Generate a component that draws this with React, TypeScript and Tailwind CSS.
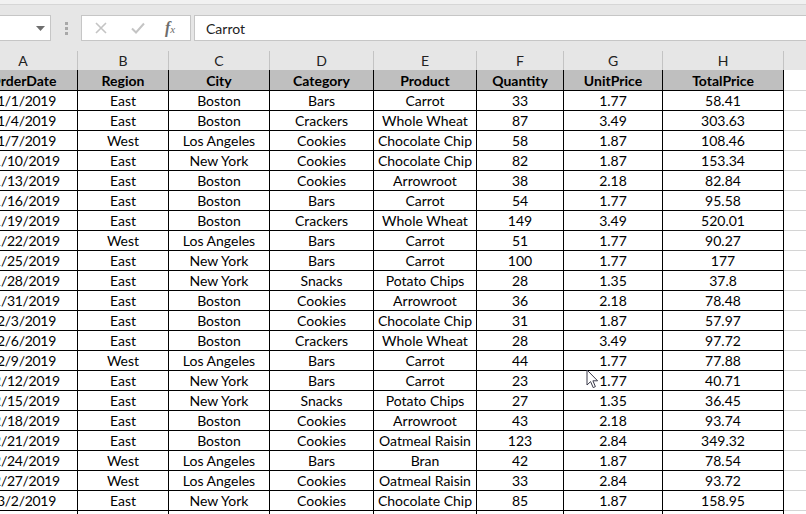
import React from "react";

const rows: string[][] = [
  ["1/1/2019", "East", "Boston", "Bars", "Carrot", "33", "1.77", "58.41"],
  ["1/4/2019", "East", "Boston", "Crackers", "Whole Wheat", "87", "3.49", "303.63"],
  ["1/7/2019", "West", "Los Angeles", "Cookies", "Chocolate Chip", "58", "1.87", "108.46"],
  ["1/10/2019", "East", "New York", "Cookies", "Chocolate Chip", "82", "1.87", "153.34"],
  ["1/13/2019", "East", "Boston", "Cookies", "Arrowroot", "38", "2.18", "82.84"],
  ["1/16/2019", "East", "Boston", "Bars", "Carrot", "54", "1.77", "95.58"],
  ["1/19/2019", "East", "Boston", "Crackers", "Whole Wheat", "149", "3.49", "520.01"],
  ["1/22/2019", "West", "Los Angeles", "Bars", "Carrot", "51", "1.77", "90.27"],
  ["1/25/2019", "East", "New York", "Bars", "Carrot", "100", "1.77", "177"],
  ["1/28/2019", "East", "New York", "Snacks", "Potato Chips", "28", "1.35", "37.8"],
  ["1/31/2019", "East", "Boston", "Cookies", "Arrowroot", "36", "2.18", "78.48"],
  ["2/3/2019", "East", "Boston", "Cookies", "Chocolate Chip", "31", "1.87", "57.97"],
  ["2/6/2019", "East", "Boston", "Crackers", "Whole Wheat", "28", "3.49", "97.72"],
  ["2/9/2019", "West", "Los Angeles", "Bars", "Carrot", "44", "1.77", "77.88"],
  ["2/12/2019", "East", "New York", "Bars", "Carrot", "23", "1.77", "40.71"],
  ["2/15/2019", "East", "New York", "Snacks", "Potato Chips", "27", "1.35", "36.45"],
  ["2/18/2019", "East", "Boston", "Cookies", "Arrowroot", "43", "2.18", "93.74"],
  ["2/21/2019", "East", "Boston", "Cookies", "Oatmeal Raisin", "123", "2.84", "349.32"],
  ["2/24/2019", "West", "Los Angeles", "Bars", "Bran", "42", "1.87", "78.54"],
  ["2/27/2019", "West", "Los Angeles", "Cookies", "Oatmeal Raisin", "33", "2.84", "93.72"],
  ["3/2/2019", "East", "New York", "Cookies", "Chocolate Chip", "85", "1.87", "158.95"],
  ["", "", "", "", "", "", "", ""],
];

const headers = ["OrderDate", "Region", "City", "Category", "Product", "Quantity", "UnitPrice", "TotalPrice"];
const letters = ["A", "B", "C", "D", "E", "F", "G", "H"];
const widths = ["w-[109px]", "w-[91px]", "w-[101px]", "w-[104px]", "w-[103px]", "w-[87px]", "w-[99px]", "w-[121px]"];

export default function App() {
  return (
    <div className="relative w-[806px] h-[514px] overflow-hidden bg-[#e6e6e6] font-['Lato',sans-serif] text-black">
      {/* top strip */}
      <div className="h-[5px] bg-[#f1f1f1] border-b border-[#d6d6d6]" />
      {/* formula bar */}
      <div className="flex items-start pt-[10px] h-[45px]">
        <div className="relative w-[51px] h-[26px] bg-white border border-l-0 border-[#c6c6c6]">
          <svg className="absolute left-[36px] top-[10px]" width="9" height="5" viewBox="0 0 9 5">
            <path d="M0 0 L9 0 L4.5 5 Z" fill="#6e6e6e" />
          </svg>
        </div>
        <div className="w-[30px] h-[26px] flex flex-col items-center justify-center gap-[2px]">
          <div className="w-[3px] h-[3px] bg-[#a8a8a8]" />
          <div className="w-[3px] h-[3px] bg-[#a8a8a8]" />
          <div className="w-[3px] h-[3px] bg-[#a8a8a8]" />
        </div>
        <div className="w-[110px] h-[26px] bg-white border border-[#c6c6c6] flex items-center">
          <svg className="ml-[13px]" width="12" height="12" viewBox="0 0 12 12">
            <path d="M1 1 L11 11 M11 1 L1 11" stroke="#c4c4c4" strokeWidth="1.6" />
          </svg>
          <svg className="ml-[24px]" width="14" height="12" viewBox="0 0 14 12">
            <path d="M1 6.5 L5 10.5 L13 1.5" stroke="#c4c4c4" strokeWidth="2" fill="none" />
          </svg>
          <span className="ml-[20px] text-[16px] italic font-bold text-[#6d6d6d] font-['Liberation_Serif',serif] leading-none">
            f<span className="text-[11px] font-normal">x</span>
          </span>
        </div>
        <div className="ml-[3px] flex-1 h-[26px] bg-white border border-r-0 border-[#c6c6c6] flex items-center pl-[11px] text-[14px] text-[#222]">
          Carrot
        </div>
      </div>
      {/* grid */}
      <div className="ml-[-31px] w-[900px]">
        {/* column letters */}
        <div className="flex h-[20px] bg-[#e6e6e6]">
          {letters.map((l, i) => (
            <div
              key={l}
              className={`${widths[i]} shrink-0 flex items-center justify-center text-[14px] text-[#222] border-r border-[#c3c3c3] mt-[1px]`}
            >
              {l}
            </div>
          ))}
          <div className="flex-1" />
        </div>
        {/* header row */}
        <div className="flex h-[21px]">
          {headers.map((h, i) => (
            <div
              key={h}
              className={`${widths[i]} shrink-0 flex items-center justify-center text-[14px] font-bold bg-[#bfbfbf] border-r border-b border-black`}
            >
              {h}
            </div>
          ))}
          <div className="flex-1 bg-white border-b border-[#d4d4d4]" />
        </div>
        {/* data rows */}
        {rows.map((r, ri) => (
          <div key={ri} className="flex h-[20px]">
            {r.map((c, ci) => (
              <div
                key={ci}
                className={`${widths[ci]} ${ci === 0 ? "pl-[7px] tracking-[-0.3px]" : ""} shrink-0 flex items-center justify-center text-[14px] bg-white border-r border-b border-black whitespace-nowrap`}
              >
                {c}
              </div>
            ))}
            <div className="flex-1 bg-white border-b border-[#d4d4d4]" />
          </div>
        ))}
      </div>
      {/* mouse cursor */}
      <svg className="absolute left-[586px] top-[369px]" width="13" height="20" viewBox="0 0 13 20">
        <path
          d="M1 1 L1 16 L4.6 12.6 L7.2 18.6 L9.4 17.6 L6.9 11.8 L11.6 11.8 Z"
          fill="white"
          stroke="#3a3a4a"
          strokeWidth="1"
          strokeLinejoin="round"
        />
      </svg>
    </div>
  );
}
